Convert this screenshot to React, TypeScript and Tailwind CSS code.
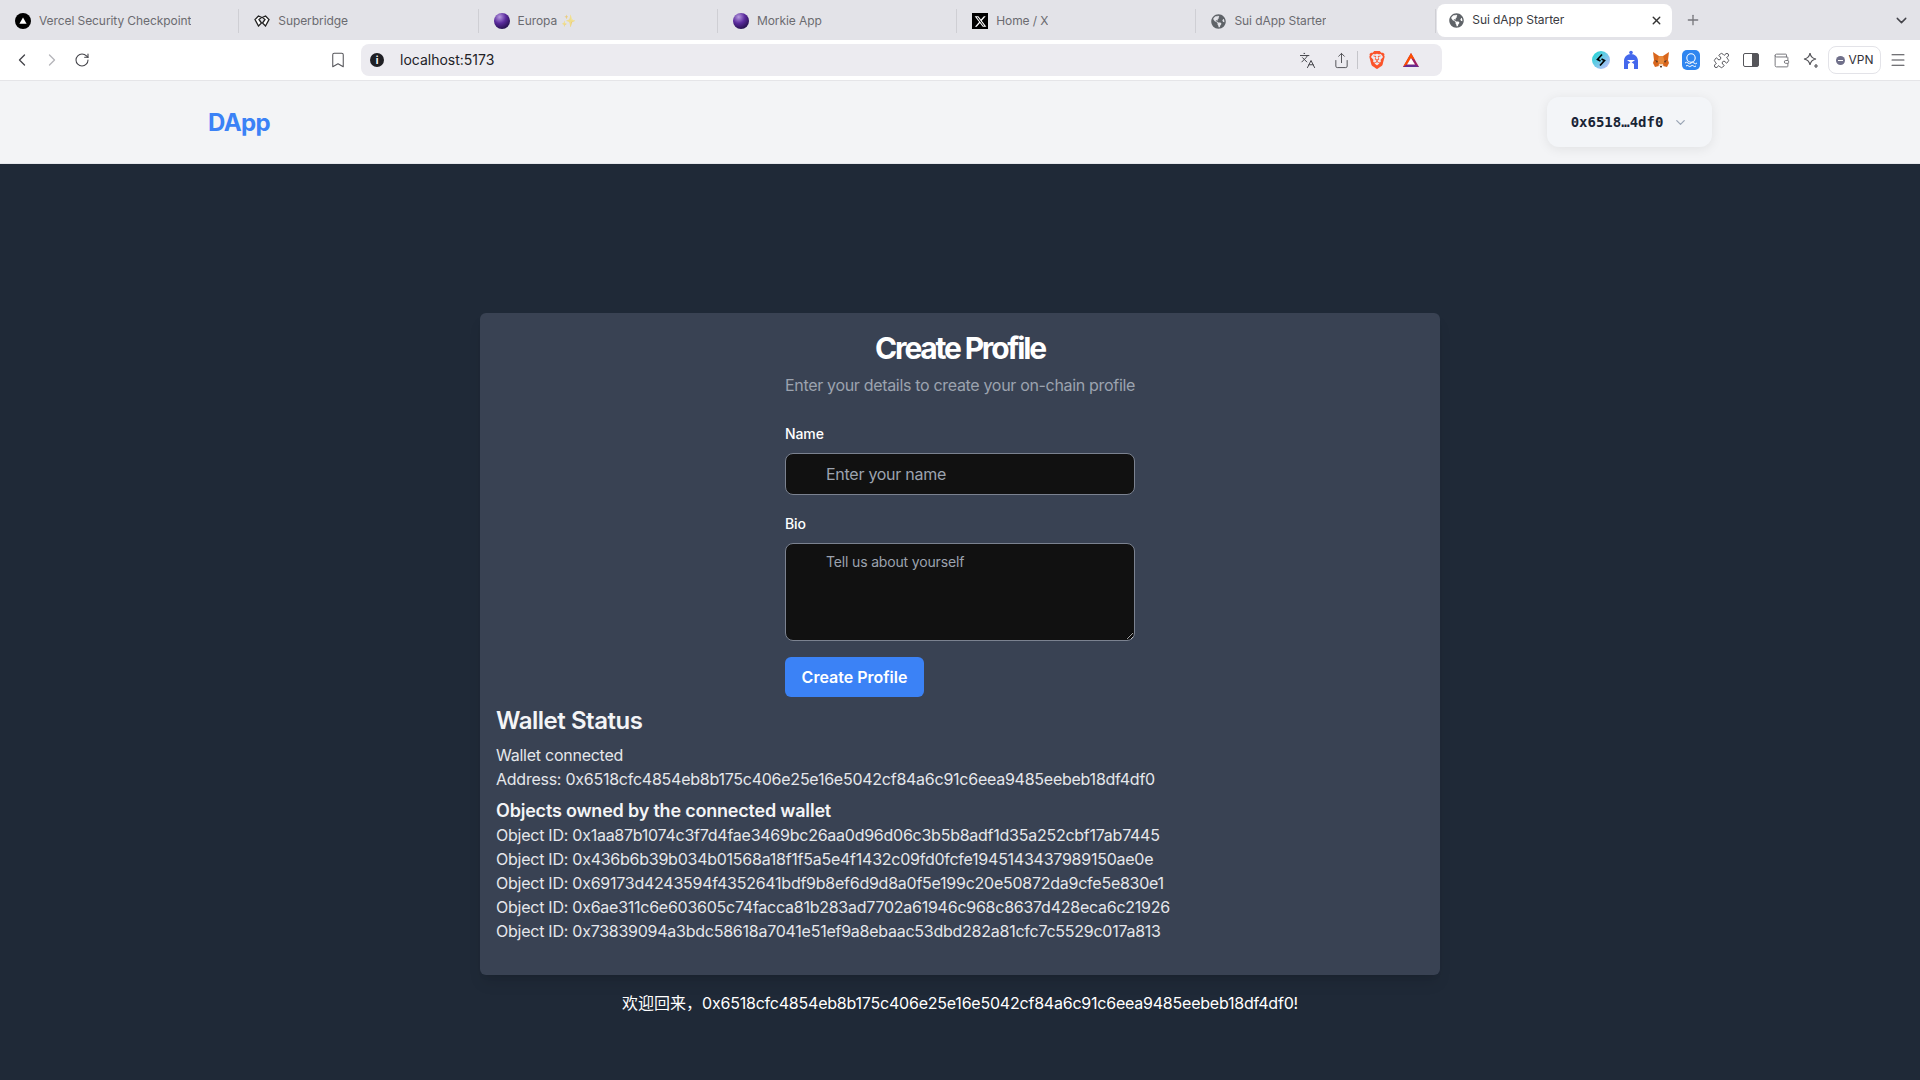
import { ChevronDown, ChevronLeft, ChevronRight, Menu, Plus, RotateCw, Bookmark, X, Languages, Share, Puzzle, Wallet } from 'lucide-react';
import { FaGlobeAmericas } from 'react-icons/fa';
import { FaXTwitter } from 'react-icons/fa6';
import { SiBrave } from 'react-icons/si';

const objectIds = [
    '0x1aa87b1074c3f7d4fae3469bc26aa0d96d06c3b5b8adf1d35a252cbf17ab7445',
    '0x436b6b39b034b01568a18f1f5a5e4f1432c09fd0fcfe1945143437989150ae0e',
    '0x69173d4243594f4352641bdf9b8ef6d9d8a0f5e199c20e50872da9cfe5e830e1',
    '0x6ae311c6e603605c74facca81b283ad7702a61946c968c8637d428eca6c21926',
    '0x73839094a3bdc58618a7041e51ef9a8ebaac53dbd282a81cfc7c5529c017a813',
];

const address = '0x6518cfc4854eb8b175c406e25e16e5042cf84a6c91c6eea9485eebeb18df4df0';

function Orb() {
    return (
        <span className="h-4 w-4 shrink-0 rounded-full bg-[radial-gradient(circle_at_35%_25%,#b79be0,#5a2a9c_40%,#1c0c40_85%)]" />
    );
}

function VercelIcon() {
    return (
        <svg viewBox="0 0 16 16" className="h-4 w-4 shrink-0">
            <circle cx="8" cy="8" r="8" fill="#000" />
            <path d="M8 4.6 11.6 10.8H4.4z" fill="#fff" />
        </svg>
    );
}

function BridgeIcon() {
    return (
        <svg viewBox="0 0 16 12" className="h-3 w-4 shrink-0">
            <path d="M4.5 1 1 4.5 4.5 11 7.5 8 5 4.5 7.5 2.5z" fill="#fff" stroke="#222" strokeWidth="1.3" />
            <path d="M11.5 1 15 4.5 11.5 11 8.5 8 11 4.5 8.5 2.5z" fill="#fff" stroke="#222" strokeWidth="1.3" />
        </svg>
    );
}

function XIcon() {
    return (
        <span className="flex h-4 w-4 shrink-0 items-center justify-center bg-black text-white">
            <FaXTwitter size={13} />
        </span>
    );
}

const tabs = [
    { title: 'Vercel Security Checkpoint', icon: <VercelIcon /> },
    { title: 'Superbridge', icon: <BridgeIcon /> },
    { title: 'Europa', suffix: '✨', icon: <Orb /> },
    { title: 'Morkie App', icon: <Orb /> },
    { title: 'Home / X', icon: <XIcon /> },
    { title: 'Sui dApp Starter', icon: <FaGlobeAmericas size={15} className="shrink-0 text-[#5f6368]" /> },
];

function TabBar() {
    return (
        <div className="flex h-10 shrink-0 items-center bg-[#e3e3e8] pt-[2px] font-['Inter',sans-serif] text-xs tracking-[-0.08px] text-[#6b6b70]">
            {tabs.map((tab) => (
                <div
                    key={tab.title}
                    className="flex h-[24px] w-[239.3px] shrink-0 items-center gap-2 border-r border-[#cfcfd4] pl-[15px]"
                >
                    {tab.icon}
                    <span className="truncate">
                        {tab.title}
                        {tab.suffix && <span className="ml-1 opacity-50">{tab.suffix}</span>}
                    </span>
                </div>
            ))}
            <div className="-mt-[2px] ml-[1.5px] flex h-[33px] w-[235px] shrink-0 items-center gap-2 rounded-lg bg-white pl-3 pr-[9px] text-[#3a3a3f]">
                <FaGlobeAmericas size={15} className="shrink-0 text-[#5f6368]" />
                <span className="flex-1 truncate">Sui dApp Starter</span>
                <X size={13} strokeWidth={2.5} className="text-[#333]" />
            </div>
            <Plus size={16} className="-mt-[2px] ml-[13px] text-[#77777c]" />
            <ChevronDown size={17} className="-mt-[2px] ml-auto mr-[10px] text-[#44444a]" />
        </div>
    );
}

function MetaMaskIcon() {
    return (
        <svg viewBox="0 0 18 18" className="h-[18px] w-[18px]">
            <path d="M1 1 7 5h4l6-4-1 8 1 3-2 4-4-1H7l-4 1-2-4 1-3z" fill="#d9661c" />
            <path d="M7 5h4l1.5 5-1.5 3H7l-1.5-3z" fill="#e88a3c" />
            <path d="M3 9l3 1-1 2zM15 9l-3 1 1 2z" fill="#5b3a22" />
            <path d="M7 13h4l.5 2h-5z" fill="#f2d8c4" />
            <path d="M8 15h2l-.3 1.6H8.3z" fill="#3a2a20" />
        </svg>
    );
}

function HelmetIcon() {
    return (
        <svg viewBox="0 0 16 20" className="h-5 w-4">
            <circle cx="8" cy="2.5" r="1.8" fill="#4468ec" />
            <path d="M8 4c4 0 7 3 7 7v8h-4v-5l-3-2-3 2v5H1v-8c0-4 3-7 7-7z" fill="#4468ec" />
            <path d="M4 10h8l-4 3z" fill="#fff" />
        </svg>
    );
}

function WaveAppIcon() {
    return (
        <svg viewBox="0 0 18 20" className="h-5 w-[18px]">
            <rect width="18" height="20" rx="5" fill="#2f86f0" />
            <circle cx="9" cy="8" r="4.2" fill="none" stroke="#fff" strokeWidth="1.1" />
            <path d="M3 13q1.5-1.5 3 0t3 0 3 0 3 0M4 16q1.25-1.2 2.5 0t2.5 0 2.5 0 2.5 0" fill="none" stroke="#fff" strokeWidth="1" />
        </svg>
    );
}

function BridgeExtIcon() {
    return (
        <svg viewBox="0 0 18 18" className="h-[18px] w-[18px]">
            <defs>
                <linearGradient id="bridge-ext" x1="0" y1="0" x2="1" y2="1">
                    <stop offset="0" stopColor="#12d6d0" />
                    <stop offset="1" stopColor="#cbbcff" />
                </linearGradient>
            </defs>
            <circle cx="9" cy="9" r="9" fill="url(#bridge-ext)" />
            <path d="M10 3.5 5.5 8.5 8.5 10M8 14.5l4.5-5L9.5 8" fill="none" stroke="#000" strokeWidth="1.7" />
        </svg>
    );
}

function SparkleIcon() {
    return (
        <svg viewBox="0 0 18 18" className="h-[18px] w-[18px]" fill="none" stroke="#55555a" strokeWidth="1.2">
            <path d="M8 2c.6 3.6 2.3 5.4 6 6-3.7.6-5.4 2.4-6 6-.6-3.6-2.3-5.4-6-6 3.7-.6 5.4-2.4 6-6z" />
            <path d="M14 13v4M12 15h4" />
        </svg>
    );
}

function BatIcon() {
    return (
        <svg viewBox="0 0 18 16" className="ml-4 h-4 w-[18px]">
            <path d="M9 1 1 15h16z" fill="#9e1f63" />
            <path d="M9 1 1 15l4-2.4L9 6z" fill="#ff5000" />
            <path d="M9 1 13 8 9 6z" fill="#ff5000" />
            <path d="M1 15h16l-4-2.4H5z" fill="#662d91" />
            <path d="M9 6 5 12.6h8z" fill="#fff" />
        </svg>
    );
}

function Toolbar() {
    return (
        <div className="flex h-[41px] shrink-0 items-center border-b border-[#e5e5e8] bg-white font-['Inter',sans-serif]">
            <ChevronLeft size={20} strokeWidth={1.6} className="ml-3 text-[#44444a]" />
            <ChevronRight size={20} strokeWidth={1.6} className="ml-[10px] text-[#b5b5ba]" />
            <RotateCw size={16} strokeWidth={1.6} className="ml-[12px] text-[#44444a]" />
            <Bookmark size={18} strokeWidth={1.4} className="ml-[239px] text-[#55555a]" />
            <div className="ml-[14px] flex h-8 w-[1081px] items-center rounded-lg bg-[#ecebf0] pl-[9px] pr-[22px]">
                <span className="flex h-[14px] w-[14px] items-center justify-center rounded-full bg-[#1f1f24] text-[10px] font-bold text-white">
                    i
                </span>
                <span className="ml-[16px] flex-1 text-sm text-[#222226]">localhost:5173</span>
                <Languages size={17} strokeWidth={1.4} className="text-[#44444a]" />
                <Share size={17} strokeWidth={1.4} className="ml-[17px] text-[#55555a]" />
                <span className="ml-[7px] h-[18px] w-px bg-[#c5c5ca]" />
                <SiBrave size={18} className="ml-[10px] text-[#fb542b]" />
                <BatIcon />
            </div>
            <div className="ml-auto flex items-center pr-[13px]">
                <span className="flex w-[30px] justify-center">
                    <BridgeExtIcon />
                </span>
                <span className="flex w-[30px] justify-center">
                    <HelmetIcon />
                </span>
                <span className="flex w-[30px] justify-center">
                    <MetaMaskIcon />
                </span>
                <span className="flex w-[30px] justify-center">
                    <WaveAppIcon />
                </span>
                <span className="flex w-[30px] justify-center">
                    <Puzzle size={17} strokeWidth={1.4} className="text-[#55555a]" />
                </span>
                <span className="flex w-[30px] justify-center">
                    <span className="flex h-[14px] w-4 justify-end rounded-[2px] border border-[#55555a]">
                        <span className="h-full w-[6px] bg-[#55555a]" />
                    </span>
                </span>
                <span className="flex w-[30px] justify-center">
                    <Wallet size={17} strokeWidth={1.4} className="text-[#77777c]" />
                </span>
                <span className="flex w-[30px] justify-center">
                    <SparkleIcon />
                </span>
                <span className="ml-[2px] flex h-[28px] w-[53px] items-center justify-center gap-1 rounded-lg border border-[#e3e3e8] text-xs text-[#33333a]">
                    <span className="flex h-[9px] w-[9px] items-center justify-center rounded-full bg-[#70708a]">
                        <span className="h-px w-[5px] bg-white" />
                    </span>
                    VPN
                </span>
                <Menu size={18} strokeWidth={1.4} className="ml-[8px] text-[#44444a]" />
            </div>
        </div>
    );
}

function Header() {
    return (
        <header className="flex h-[83px] shrink-0 items-center justify-between border-b border-[#e5e7eb] bg-[#f3f4f6] pl-[208px] pr-[208px]">
            <span className="mt-[2px] text-2xl font-bold tracking-[-0.6px] text-[#3b82f6]">DApp</span>
            <button className="flex h-[50px] w-[165px] items-center justify-center gap-[10px] rounded-xl bg-[#f3f5f8] shadow-[0_2px_12px_rgba(0,0,0,0.08)]">
                <span className="font-['DejaVu_Sans_Mono',monospace] text-sm font-bold text-[#182435]">
                    0x6518…4df0
                </span>
                <ChevronDown size={15} className="text-[#9aa5b5]" />
            </button>
        </header>
    );
}

function ProfileForm() {
    return (
        <div className="flex flex-col items-center">
            <h1 className="text-3xl font-bold tracking-[-2.2px] text-white">Create Profile</h1>
            <p className="mt-[7px] tracking-[-0.32px] text-[#9ca3af]">
                Enter your details to create your on-chain profile
            </p>
            <form className="mt-[27px] flex w-[350px] flex-col">
                <label className="text-sm font-medium tracking-[-0.1px] text-white">Name</label>
                <input
                    placeholder="Enter your name"
                    className="mt-[9px] h-[42px] rounded-lg border border-[#7b8290] bg-[#111111] pl-10 tracking-[-0.27px] text-white placeholder:text-[#9ca3af]"
                />
                <label className="mt-[19px] text-sm font-medium tracking-[-0.1px] text-white">Bio</label>
                <textarea
                    placeholder="Tell us about yourself"
                    className="mt-[9px] h-[98px] rounded-lg border border-[#7b8290] bg-[#111111] pl-10 pt-2 text-sm tracking-[-0.16px] text-white placeholder:text-[#9ca3af]"
                />
                <button
                    type="button"
                    className="mt-4 h-10 w-[139px] rounded-md bg-[#3b82f6] font-semibold text-white"
                >
                    Create Profile
                </button>
            </form>
        </div>
    );
}

function WalletStatus() {
    return (
        <div className="mt-[8px] tracking-[-0.25px] text-[#e5e7eb]">
            <h2 className="text-2xl font-semibold tracking-[-0.47px] text-[#f3f4f6]">Wallet Status</h2>
            <p className="mt-[6px]">Wallet connected</p>
            <p>Address: {address}</p>
            <h3 className="mt-[6px] text-lg font-semibold tracking-[-0.2px] text-[#f3f4f6]">
                Objects owned by the connected wallet
            </h3>
            <ul className="-mt-[2px]">
                {objectIds.map((id) => (
                    <li key={id}>Object ID: {id}</li>
                ))}
            </ul>
        </div>
    );
}

export default function App() {
    return (
        <div className="flex h-screen flex-col overflow-hidden bg-[#1f2937] font-['Inter',sans-serif]">
            <TabBar />
            <Toolbar />
            <Header />
            <main className="flex flex-1 flex-col items-center pt-[149px]">
                <div className="w-[960px] rounded-md bg-[#394253] px-4 pb-8 pt-[17px] shadow-lg">
                    <ProfileForm />
                    <WalletStatus />
                </div>
                <p className="mt-[15px] tracking-[-0.22px] text-white">
                    <span className="font-['Noto_Sans_CJK_SC',sans-serif] tracking-normal">欢迎回来，</span>
                    {address}!
                </p>
            </main>
        </div>
    );
}
